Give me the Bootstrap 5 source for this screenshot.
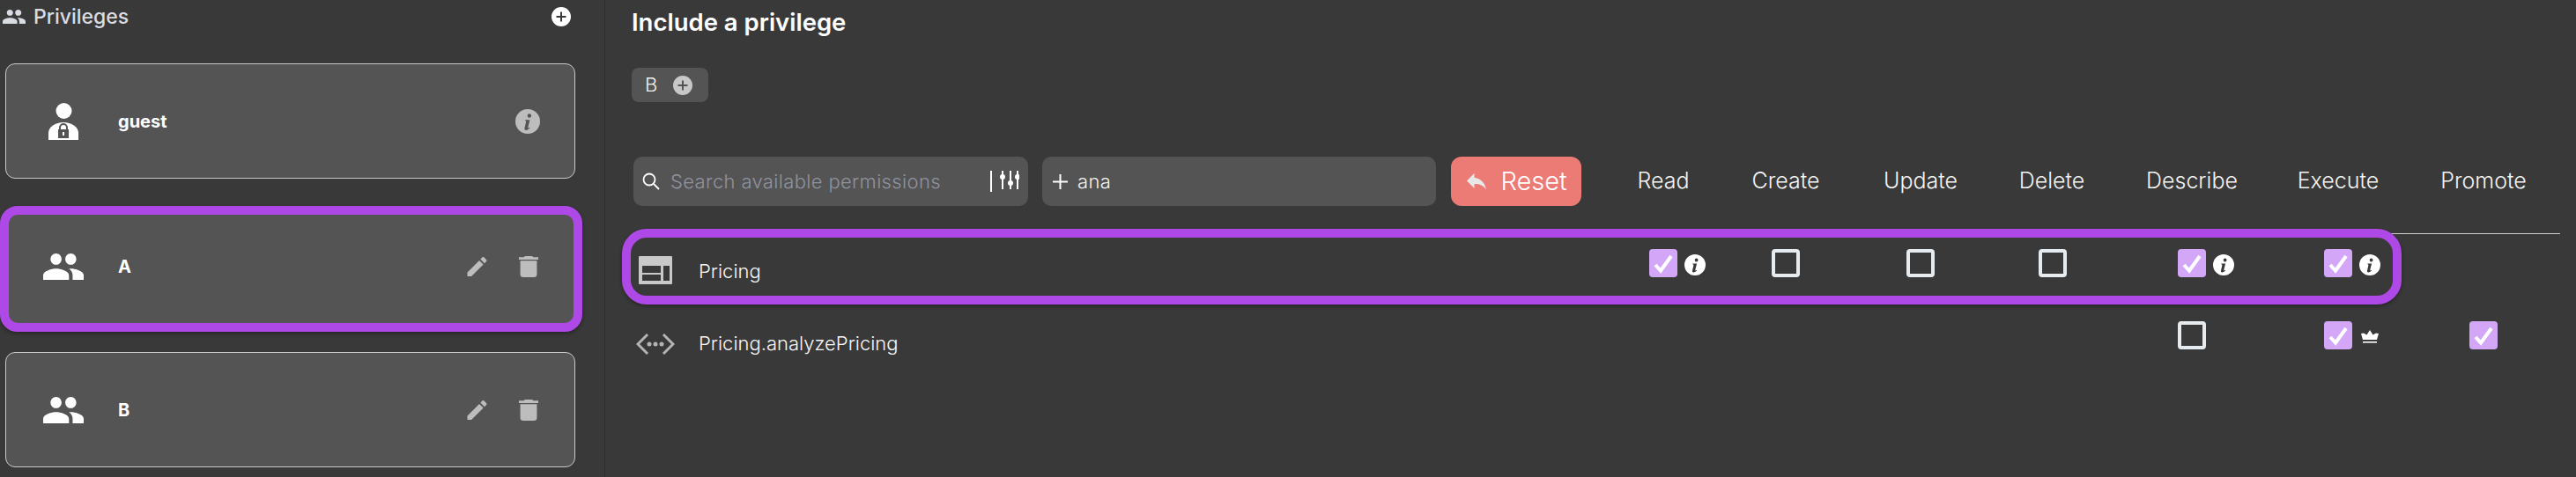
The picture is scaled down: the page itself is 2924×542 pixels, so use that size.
<!DOCTYPE html>
<html lang="en">
<head>
  <meta charset="UTF-8" />
  <title>Privileges</title>
  <link href="https://cdn.jsdelivr.net/npm/bootstrap@5.3.3/dist/css/bootstrap.min.css" rel="stylesheet">
  <style>
    body {
      background-color: #393939;
      color: #fff;
      font-family: "Inter", "Open Sans", sans-serif;
      overflow: hidden;
    }
    .page-wrap { width: 2924px; height: 542px; }

    /* left column */
    .side-col { width: 687px; height: 542px; border-right: 1px solid #2e2e2e; padding-left: 6px; flex: none; }
    .side-head { height: 38px; margin-left: -3px; padding-right: 38px; color: #d9dde3; font-size: 23px; font-weight: 500; }
    .side-head .side-title { margin-left: 9px; }
    .priv-card {
      width: 647px; height: 131px;
      background-color: #545454;
      border: 1px solid #c9c9c9;
      border-radius: 11px;
      padding: 0 41px 0 29px;
      font-weight: 700; font-size: 20px;
    }
    .priv-card.is-first { margin-top: 34px; margin-bottom: 31px; }
    .priv-card.is-picked {
      width: 661px; height: 143px;
      margin: 0 0 23px -6px;
      border: 10px solid #ae49e8;
      border-radius: 20px;
      padding: 0 40px 6px 26px;
      box-shadow: 0 2px 4px rgba(0,0,0,.35);
    }
    .priv-slot { width: 72px; flex: none; margin-right: 26px; }
    .act-gap { gap: 36px; color: #bdbdbd; }

    /* right column */
    .main-col { padding-left: 30px; width: 2217px; flex: none; }
    .main-title { height: 50px; margin: 0; font-size: 27.5px; line-height: 50px; font-weight: 600; }
    .priv-chip { width: 87px; height: 39px; margin-top: 27px; background: #545454; border-radius: 8px; padding-left: 15px; font-size: 22px; font-weight: 300; color: #f0f0f0; gap: 18px; }
    .tool-row { margin-top: 62px; margin-left: 2px; height: 88px; align-items: flex-start; }
    .head-line { width: 2187px; border-bottom: 1px solid #cfcfcf; }
    .filter-box { height: 56px; background: #545454; border-radius: 10px; flex: none; }
    .filter-box .form-control {
      background: transparent; border: 0; box-shadow: none; padding: 0;
      color: #f2f2f2; font-size: 22px; font-weight: 300; height: 56px; letter-spacing: .35px;
    }
    .filter-box .form-control::placeholder { color: #8f939e; opacity: 1; }
    .filter-search { width: 448px; padding: 0 10px 0 10px; margin-right: 16px; }
    .filter-plus { width: 447px; padding: 0 12px; margin-right: 17px; }
    .reset-btn {
      width: 148px; height: 56px; flex: none; padding: 0 0 0 2px;
      background: #ec7a75; border: 0; border-radius: 12px;
      color: #fff; font-size: 29px; font-weight: 300; gap: 16px;
    }
    .col-heads { display: grid; grid-template-columns: 124px 154px 152px 146px 172px 160px 170px; margin-left: 31px; height: 56px; align-items: center; }
    .col-heads span { text-align: center; font-size: 25px; font-weight: 300; color: #f4f4f4; }

    .perm-row { margin-left: -11px; }
    .perm-ring {
      display: grid;
      grid-template-columns: 1156px 139px 153px 150px 158px 166px 78px;
      width: 2020px; height: 86px;
      border: 10px solid transparent;
      border-radius: 28px;
      padding-top: 13px;
      box-sizing: border-box;
      align-items: start;
    }
    .perm-ring.is-picked { border-color: #ae49e8; margin-top: -6px; box-shadow: 0 2px 4px rgba(0,0,0,.35); }
    .perm-ring.is-plain { padding-top: 9px; height: 84px; }
    .perm-name { height: 48px; font-size: 22px; font-weight: 300; color: #f6f6f6; }
    .perm-name span { margin-top: 2px; }
    .perm-icon { width: 56px; margin-right: 21px; flex: none; color: #c9c9c9; }
    .is-plain .perm-icon { margin-top: 4px; }
    .perm-cell { gap: 8px; height: 32px; }
    .perm-box.form-check-input {
      width: 32px; height: 32px; margin: 0; flex: none;
      background-color: transparent;
      border: 4px solid #e6ebf0;
      border-radius: 4px;
    }
    .perm-box.form-check-input:checked {
      background-color: #d3a6f8;
      border: 0;
      background-size: 32px 32px;
      background-image: url("data:image/svg+xml,%3csvg xmlns='http://www.w3.org/2000/svg' viewBox='0 0 32 32'%3e%3cpath fill='none' stroke='%23fff' stroke-width='4' d='M7 18l6 6.5L25 8'/%3e%3c/svg%3e");
    }
    .promote-cell { margin-left: 77px; margin-top: 19px; }
    .info-mark { margin-top: 6px; }
    .crown-mark { margin: 10px 2px 0 2px; }
    .ico-sprites { display: none; }
  </style>
</head>
<body>
  <svg class="ico-sprites" xmlns="http://www.w3.org/2000/svg">
    <symbol id="i-group" viewBox="1 5 22 14" preserveAspectRatio="none"><path d="M16 11c1.66 0 2.99-1.34 2.99-3S17.66 5 16 5c-1.66 0-3 1.34-3 3s1.34 3 3 3zm-8 0c1.66 0 2.99-1.34 2.99-3S9.66 5 8 5C6.34 5 5 6.34 5 8s1.34 3 3 3zm0 2c-2.33 0-7 1.17-7 3.5V19h14v-2.5c0-2.33-4.67-3.5-7-3.5zm8 0c-.29 0-.62.02-.97.05 1.16.84 1.97 1.97 1.97 3.45V19h6v-2.5c0-2.33-4.67-3.5-7-3.5z" fill="currentColor"/></symbol>
    <symbol id="i-edit" viewBox="3 3 18 18"><path d="M3 17.25V21h3.75L17.81 9.94l-3.75-3.75L3 17.25zM20.71 7.04c.39-.39.39-1.02 0-1.41l-2.34-2.34c-.39-.39-1.02-.39-1.41 0l-1.83 1.83 3.75 3.75 1.83-1.83z" fill="currentColor"/></symbol>
    <symbol id="i-trash" viewBox="5 3 14 18" preserveAspectRatio="none"><path d="M6 19c0 1.1.9 2 2 2h8c1.1 0 2-.9 2-2V7H6v12zM19 4h-3.5l-1-1h-5l-1 1H5v2h14V4z" fill="currentColor"/></symbol>
    <symbol id="i-info" viewBox="0 0 24 24"><path fill="currentColor" fill-rule="evenodd" d="M12 0a12 12 0 1 0 0 24a12 12 0 0 0 0-24zM13.6 4.600a1.900 1.900 0 1 1 0 3.800a1.900 1.900 0 0 1 0-3.800zM9.200 10.400h4.900l-1.900 7.600c-.1.500.3.600 1.600-.3l.4.600c-1.500 1.600-2.700 2.200-3.800 2.200-1.200 0-1.700-.8-1.400-2l1.400-6.200c.1-.6-.4-.9-.8-1.100z"/></symbol>
    <symbol id="i-plus-disc" viewBox="0 0 22 22"><path fill="currentColor" fill-rule="evenodd" d="M11 0a11 11 0 1 0 0 22a11 11 0 0 0 0-22zM10 5.500h2V10h4.500v2H12v4.500h-2V12H5.500v-2H10z"/></symbol>
  </svg>

  <div class="page-wrap d-flex">
    <div class="side-col">
      <div class="side-head d-flex align-items-center justify-content-between">
        <div class="d-flex align-items-center">
          <svg width="26" height="16"><use href="#i-group"/></svg>
          <span class="side-title">Privileges</span>
        </div>
        <svg width="22" height="22" class="text-white"><use href="#i-plus-disc"/></svg>
      </div>

      <div class="priv-card is-first d-flex align-items-center">
        <div class="priv-slot d-flex justify-content-center">
          <svg width="34" height="42" viewBox="0 0 34 42">
            <circle cx="17.500" cy="9" r="9" fill="#fff"/>
            <path d="M0 42V34C0 27 8 22 17 22S34 27 34 34V42Z" fill="#fff"/>
            <path d="M13 31v-3a4 4 0 0 1 8 0v3" fill="none" stroke="#545454" stroke-width="2"/>
            <rect x="11" y="30" width="12" height="10" fill="#545454"/>
            <rect x="16" y="33" width="2" height="4" fill="#fff"/>
          </svg>
        </div>
        <span class="flex-grow-1">guest</span>
        <svg width="28" height="28" style="margin-right:-2px;color:#bdbdbd"><use href="#i-info"/></svg>
      </div>

      <div class="priv-card is-picked d-flex align-items-center">
        <div class="priv-slot d-flex justify-content-center">
          <svg width="46" height="30" class="text-white"><use href="#i-group"/></svg>
        </div>
        <span class="flex-grow-1">A</span>
        <div class="act-gap d-flex align-items-center">
          <svg width="23" height="22"><use href="#i-edit"/></svg>
          <svg width="22" height="24"><use href="#i-trash"/></svg>
        </div>
      </div>

      <div class="priv-card d-flex align-items-center">
        <div class="priv-slot d-flex justify-content-center">
          <svg width="46" height="30" class="text-white"><use href="#i-group"/></svg>
        </div>
        <span class="flex-grow-1">B</span>
        <div class="act-gap d-flex align-items-center">
          <svg width="23" height="22"><use href="#i-edit"/></svg>
          <svg width="22" height="24"><use href="#i-trash"/></svg>
        </div>
      </div>
    </div>

    <div class="main-col">
      <h1 class="main-title">Include a privilege</h1>

      <div class="priv-chip d-flex align-items-center">
        <span>B</span>
        <svg width="22" height="22" style="color:#c8c8c8"><use href="#i-plus-disc"/></svg>
      </div>

      <div class="tool-row head-line d-flex">
        <div class="filter-box filter-search d-flex align-items-center">
          <svg width="20" height="20" viewBox="0 0 20 20" class="flex-shrink-0 me-2" fill="none" stroke="#fff" stroke-width="1.800">
            <circle cx="8" cy="8" r="6.500"/><path d="M13 13l6 6"/>
          </svg>
          <input type="text" class="form-control ms-1" placeholder="Search available permissions">
          <svg width="33" height="26" viewBox="0 0 33 26" class="flex-shrink-0 ms-1" fill="#fff">
            <rect x="0" y="1" width="2" height="24"/>
            <rect x="13" y="1" width="2" height="21"/><circle cx="14" cy="8" r="3"/>
            <rect x="22" y="1" width="2" height="21"/><circle cx="23" cy="15" r="3"/>
            <rect x="30" y="1" width="2" height="21"/><circle cx="31" cy="8" r="3"/>
          </svg>
        </div>
        <div class="filter-box filter-plus d-flex align-items-center">
          <svg width="17" height="17" viewBox="0 0 17 17" class="flex-shrink-0" style="margin-right:11px" fill="#fff">
            <rect x="7.500" y="0" width="2" height="17"/><rect x="0" y="7.500" width="17" height="2"/>
          </svg>
          <input type="text" class="form-control" value="ana">
        </div>
        <button type="button" class="btn reset-btn d-flex align-items-center justify-content-center">
          <svg width="22" height="20" viewBox="3 5 18 15" style="color:#e8e8e8"><path fill="currentColor" d="M10 9V5l-7 7 7 7v-4.100c5 0 8.500 1.600 11 5.100-1-5-4-10-11-11z"/></svg>
          <span>Reset</span>
        </button>
        <div class="col-heads">
          <span>Read</span><span>Create</span><span>Update</span><span>Delete</span><span>Describe</span><span>Execute</span><span>Promote</span>
        </div>
      </div>

      <div class="perm-row d-flex">
        <div class="perm-ring is-picked">
          <div class="perm-name d-flex align-items-center">
            <div class="perm-icon d-flex justify-content-center">
              <svg width="38" height="32" viewBox="0 0 38 32">
                <path fill="currentColor" fill-rule="evenodd" d="M1 0h36a1 1 0 0 1 1 1v30a1 1 0 0 1-1 1H1a1 1 0 0 1-1-1V1a1 1 0 0 1 1-1zM4 11v8h21v-8zM4 21v7h21v-7zM28 11v17h7V11z"/>
              </svg>
            </div>
            <span>Pricing</span>
          </div>
          <div class="perm-cell d-flex align-items-start"><input class="form-check-input perm-box" type="checkbox" checked><svg class="info-mark text-white" width="24" height="24"><use href="#i-info"/></svg></div>
          <div class="perm-cell d-flex"><input class="form-check-input perm-box" type="checkbox"></div>
          <div class="perm-cell d-flex"><input class="form-check-input perm-box" type="checkbox"></div>
          <div class="perm-cell d-flex"><input class="form-check-input perm-box" type="checkbox"></div>
          <div class="perm-cell d-flex align-items-start"><input class="form-check-input perm-box" type="checkbox" checked><svg class="info-mark text-white" width="24" height="24"><use href="#i-info"/></svg></div>
          <div class="perm-cell d-flex align-items-start"><input class="form-check-input perm-box" type="checkbox" checked><svg class="info-mark text-white" width="24" height="24"><use href="#i-info"/></svg></div>
        </div>
      </div>

      <div class="perm-row d-flex">
        <div class="perm-ring is-plain">
          <div class="perm-name d-flex align-items-center">
            <div class="perm-icon d-flex justify-content-center">
              <svg width="44" height="26" viewBox="0 0 44 26" fill="none" stroke="#b4b4b4" stroke-width="3">
                <path d="M13 2L2 13l11 11M31 2l11 11-11 11"/>
                <g fill="#b4b4b4" stroke="none"><circle cx="15" cy="13" r="2.500"/><circle cx="22" cy="13" r="2.500"/><circle cx="29" cy="13" r="2.500"/></g>
              </svg>
            </div>
            <span>Pricing.analyzePricing</span>
          </div>
          <div class="perm-cell"></div>
          <div class="perm-cell"></div>
          <div class="perm-cell"></div>
          <div class="perm-cell"></div>
          <div class="perm-cell d-flex"><input class="form-check-input perm-box" type="checkbox"></div>
          <div class="perm-cell d-flex align-items-start">
            <input class="form-check-input perm-box" type="checkbox" checked>
            <svg class="crown-mark text-white" width="20" height="15" viewBox="0 0 20 15" fill="currentColor">
              <path d="M10 0l3.500 5.500 3.500-1.900 1 .2L20 4l-2 7H2L0 4l2-.2 1-.2 3.500 1.900z"/><rect x="2" y="13" width="16" height="1.600"/>
            </svg>
          </div>
        </div>
        <div class="promote-cell"><input class="form-check-input perm-box" type="checkbox" checked></div>
      </div>
    </div>
  </div>
</body>
</html>
